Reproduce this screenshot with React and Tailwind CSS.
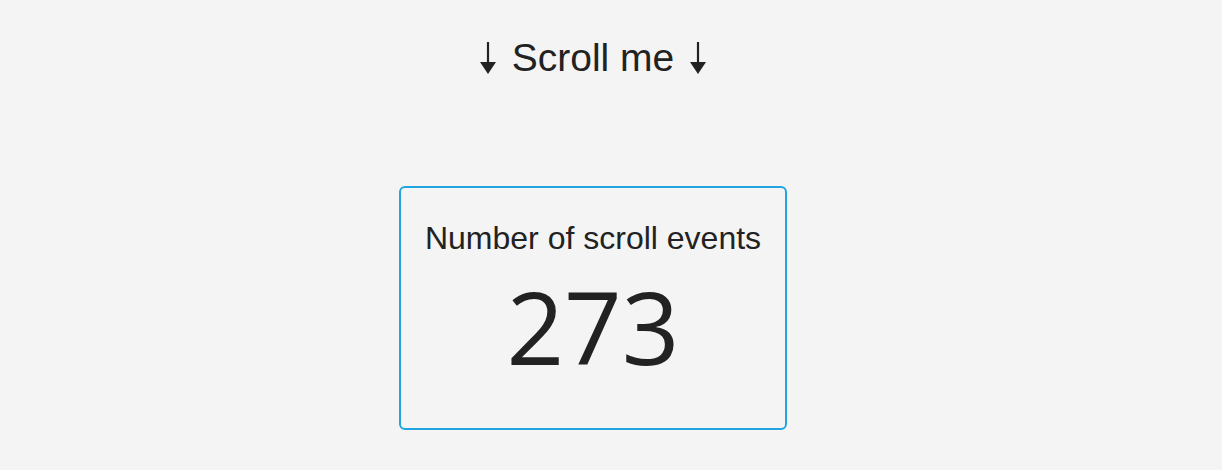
function DownArrow() {
  return (
    <svg width="18" height="32" viewBox="0 0 18 32" className="inline-block">
      <path d="M9 0v22" stroke="#222" strokeWidth="2.2" />
      <path d="M1 20h16L9 32z" fill="#222" />
    </svg>
  )
}

export default function App() {
  return (
    <div className="min-h-[470px] bg-[#f4f4f4] text-[#222] flex flex-col items-center pr-[36px] font-['Liberation_Sans',Arial,sans-serif]">
      <h1 className="mt-[34px] text-[39px] leading-[48px] flex items-center gap-[15px]">
        <DownArrow />
        <span>Scroll me</span>
        <DownArrow />
      </h1>
      <div className="mt-[104px] w-[388px] h-[244px] border-2 border-[#22a5df] rounded-md flex flex-col items-center">
        <p className="mt-[31px] text-[32px] leading-[38px]">Number of scroll events</p>
        <p className="mt-[16px] text-[101px] leading-[106px] font-['Open_Sans',sans-serif]">273</p>
      </div>
    </div>
  )
}
